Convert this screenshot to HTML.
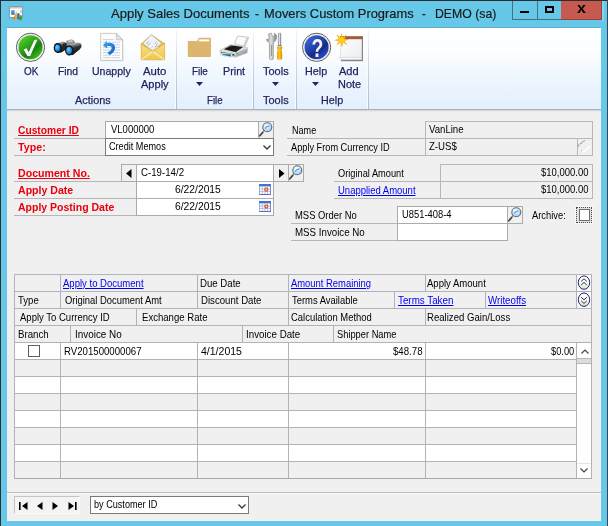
<!DOCTYPE html>
<html><head><meta charset="utf-8"><title>Apply Sales Documents</title>
<style>
html,body{margin:0;padding:0;}
body{width:608px;height:526px;overflow:hidden;background:#66c8e8;position:relative;font-family:"Liberation Sans",sans-serif;}
#w{position:absolute;left:0;top:0;width:608px;height:526px;will-change:transform;}
.a{position:absolute;box-sizing:border-box;}
.t{position:absolute;white-space:pre;transform-origin:0 0;}
svg{position:absolute;overflow:visible;}
</style></head><body>
<div id="w">
<div class="a" style="left:0px;top:0px;width:608px;height:526px;background:#66c8e8;"></div>
<div class="a" style="left:0px;top:0px;width:608px;height:1px;background:#2e2e2e;"></div>
<div class="a" style="left:0px;top:0px;width:1px;height:526px;background:#2e2e2e;"></div>
<div class="a" style="left:607px;top:0px;width:1px;height:526px;background:#3c464c;"></div>
<div class="a" style="left:7px;top:27px;width:594px;height:1px;background:#5bb0cc;"></div>
<div class="a" style="left:512px;top:1px;width:50px;height:19px;background:#46707f;"></div>
<div class="a" style="left:513px;top:1px;width:24px;height:18px;background:#66c8e8;"></div>
<div class="a" style="left:538px;top:1px;width:23px;height:18px;background:#66c8e8;"></div>
<div class="a" style="left:561px;top:1px;width:41px;height:18px;background:#c75a50;"></div>
<div class="a" style="left:561px;top:19px;width:41px;height:1px;background:#9c4038;"></div>
<div class="a" style="left:601px;top:1px;width:1px;height:19px;background:#9c4038;"></div>
<div class="a" style="left:520px;top:11px;width:9px;height:2px;background:#000;"></div>
<div class="a" style="left:545px;top:6px;width:9px;height:7px;background:transparent;border:2px solid #000;"></div>
<div class="t" style="left:577.20px;top:-1.70px;font-size:15px;line-height:20px;color:#000;transform:scaleX(1.0627);font-weight:bold;">x</div>
<div class="a" style="left:602px;top:1px;width:2px;height:20px;background:#7fd6f2;"></div>
<div class="t" style="left:110.90px;top:4.69px;font-size:13.6px;line-height:18px;color:#1a1a1a;transform:scaleX(0.9597);-webkit-text-stroke:0.2px #1a1a1a;">Apply Sales Documents</div>
<div class="t" style="left:254.60px;top:4.69px;font-size:13.6px;line-height:18px;color:#1a1a1a;transform:scaleX(0.8889);-webkit-text-stroke:0.2px #1a1a1a;">-</div>
<div class="t" style="left:264.00px;top:4.69px;font-size:13.6px;line-height:18px;color:#1a1a1a;transform:scaleX(0.9479);-webkit-text-stroke:0.2px #1a1a1a;">Movers Custom Programs</div>
<div class="t" style="left:421.90px;top:4.69px;font-size:13.6px;line-height:18px;color:#1a1a1a;transform:scaleX(0.8222);-webkit-text-stroke:0.2px #1a1a1a;">-</div>
<div class="t" style="left:435.00px;top:4.69px;font-size:13.6px;line-height:18px;color:#1a1a1a;transform:scaleX(0.9028);-webkit-text-stroke:0.2px #1a1a1a;">DEMO (sa)</div>
<div class="a" style="left:7px;top:28px;width:594px;height:81px;background:linear-gradient(#ffffff 0%,#fbfdff 30%,#eef6fe 62%,#e3effc 100%);"></div>
<div class="a" style="left:7px;top:109px;width:594px;height:1px;background:#a9b0b9;"></div>
<div class="a" style="left:176px;top:29px;width:1px;height:80px;background:linear-gradient(rgba(200,210,222,0.15) 0%,#ccd5e0 45%,#b2bdca 100%);"></div>
<div class="a" style="left:175px;top:29px;width:1px;height:80px;background:linear-gradient(rgba(255,255,255,0) 0%,rgba(255,255,255,0.8) 100%);"></div>
<div class="a" style="left:253px;top:29px;width:1px;height:80px;background:linear-gradient(rgba(200,210,222,0.15) 0%,#ccd5e0 45%,#b2bdca 100%);"></div>
<div class="a" style="left:252px;top:29px;width:1px;height:80px;background:linear-gradient(rgba(255,255,255,0) 0%,rgba(255,255,255,0.8) 100%);"></div>
<div class="a" style="left:296px;top:29px;width:1px;height:80px;background:linear-gradient(rgba(200,210,222,0.15) 0%,#ccd5e0 45%,#b2bdca 100%);"></div>
<div class="a" style="left:295px;top:29px;width:1px;height:80px;background:linear-gradient(rgba(255,255,255,0) 0%,rgba(255,255,255,0.8) 100%);"></div>
<div class="a" style="left:368px;top:29px;width:1px;height:80px;background:linear-gradient(rgba(200,210,222,0.15) 0%,#ccd5e0 45%,#b2bdca 100%);"></div>
<div class="a" style="left:367px;top:29px;width:1px;height:80px;background:linear-gradient(rgba(255,255,255,0) 0%,rgba(255,255,255,0.8) 100%);"></div>
<div class="t" style="left:23.75px;top:63.58px;font-size:11.3px;line-height:15px;color:#23235f;transform:scaleX(0.8769);-webkit-text-stroke:0.25px #23235f;">OK</div>
<div class="t" style="left:57.50px;top:63.58px;font-size:11.3px;line-height:15px;color:#23235f;transform:scaleX(0.9143);-webkit-text-stroke:0.25px #23235f;">Find</div>
<div class="t" style="left:91.50px;top:63.58px;font-size:11.3px;line-height:15px;color:#23235f;transform:scaleX(0.9333);-webkit-text-stroke:0.25px #23235f;">Unapply</div>
<div class="t" style="left:143.00px;top:63.58px;font-size:11.3px;line-height:15px;color:#23235f;transform:scaleX(1.0054);-webkit-text-stroke:0.25px #23235f;">Auto</div>
<div class="t" style="left:140.50px;top:76.98px;font-size:11.3px;line-height:15px;color:#23235f;transform:scaleX(0.9778);-webkit-text-stroke:0.25px #23235f;">Apply</div>
<div class="t" style="left:191.75px;top:63.58px;font-size:11.3px;line-height:15px;color:#23235f;transform:scaleX(0.8690);-webkit-text-stroke:0.25px #23235f;">File</div>
<div class="t" style="left:223.00px;top:63.58px;font-size:11.3px;line-height:15px;color:#23235f;transform:scaleX(0.9514);-webkit-text-stroke:0.25px #23235f;">Print</div>
<div class="t" style="left:262.50px;top:63.58px;font-size:11.3px;line-height:15px;color:#23235f;transform:scaleX(0.9714);-webkit-text-stroke:0.25px #23235f;">Tools</div>
<div class="t" style="left:305.00px;top:63.58px;font-size:11.3px;line-height:15px;color:#23235f;transform:scaleX(0.9514);-webkit-text-stroke:0.25px #23235f;">Help</div>
<div class="t" style="left:339.25px;top:63.58px;font-size:11.3px;line-height:15px;color:#23235f;transform:scaleX(0.9750);-webkit-text-stroke:0.25px #23235f;">Add</div>
<div class="t" style="left:337.50px;top:76.98px;font-size:11.3px;line-height:15px;color:#23235f;transform:scaleX(0.9684);-webkit-text-stroke:0.25px #23235f;">Note</div>
<div class="t" style="left:74.50px;top:92.68px;font-size:11.3px;line-height:15px;color:#23235f;transform:scaleX(0.9627);-webkit-text-stroke:0.25px #23235f;">Actions</div>
<div class="t" style="left:207.00px;top:92.68px;font-size:11.3px;line-height:15px;color:#23235f;transform:scaleX(0.8552);-webkit-text-stroke:0.25px #23235f;">File</div>
<div class="t" style="left:262.50px;top:92.68px;font-size:11.3px;line-height:15px;color:#23235f;transform:scaleX(0.9714);-webkit-text-stroke:0.25px #23235f;">Tools</div>
<div class="t" style="left:321.25px;top:92.68px;font-size:11.3px;line-height:15px;color:#23235f;transform:scaleX(0.9514);-webkit-text-stroke:0.25px #23235f;">Help</div>
<svg style="left:196.0px;top:81.5px" width="7" height="4"><path d="M0 0H7L3.5 4Z" fill="#1e2a5e"/></svg>
<svg style="left:271.5px;top:81.5px" width="7" height="4"><path d="M0 0H7L3.5 4Z" fill="#1e2a5e"/></svg>
<svg style="left:312.0px;top:81.5px" width="7" height="4"><path d="M0 0H7L3.5 4Z" fill="#1e2a5e"/></svg>
<div class="a" style="left:7px;top:110px;width:594px;height:411px;background:#f0f0f0;"></div>
<div class="a" style="left:600px;top:110px;width:1px;height:411px;background:#f7f3f2;"></div>
<div class="a" style="left:7px;top:520px;width:594px;height:1px;background:#f7f3f2;"></div>
<div class="a" style="left:7px;top:110px;width:594px;height:1px;background:#d6d8db;"></div>
<div class="a" style="left:7px;top:111px;width:594px;height:1px;background:#e8e9ea;"></div>
<div class="t" style="left:18.20px;top:123.19px;font-size:11px;line-height:14px;color:#e8000c;transform:scaleX(0.9315);font-weight:bold;text-decoration:underline;text-decoration-thickness:1px;text-underline-offset:1px;">Customer ID</div>
<div class="t" style="left:18.20px;top:140.19px;font-size:11px;line-height:14px;color:#e8000c;transform:scaleX(0.9719);font-weight:bold;">Type:</div>
<div class="a" style="left:14px;top:138px;width:92px;height:1px;background:#b6b6b6;"></div>
<div class="a" style="left:14px;top:155px;width:92px;height:1px;background:#b6b6b6;"></div>
<div class="t" style="left:18.20px;top:166.19px;font-size:11px;line-height:14px;color:#e8000c;transform:scaleX(0.9638);font-weight:bold;text-decoration:underline;text-decoration-thickness:1px;text-underline-offset:1px;">Document No.</div>
<div class="t" style="left:18.20px;top:183.19px;font-size:11px;line-height:14px;color:#e8000c;transform:scaleX(0.9617);font-weight:bold;">Apply Date</div>
<div class="t" style="left:18.20px;top:200.19px;font-size:11px;line-height:14px;color:#e8000c;transform:scaleX(0.9546);font-weight:bold;">Apply Posting Date</div>
<div class="a" style="left:14px;top:181px;width:108px;height:1px;background:#b6b6b6;"></div>
<div class="a" style="left:14px;top:198px;width:123px;height:1px;background:#b6b6b6;"></div>
<div class="a" style="left:14px;top:215px;width:123px;height:1px;background:#b6b6b6;"></div>
<div class="a" style="left:105px;top:121px;width:154px;height:18px;background:#fff;border:1px solid #ababab;"></div>
<div class="t" style="left:110.50px;top:122.19px;font-size:11px;line-height:14px;color:#000;transform:scaleX(0.8628);">VL000000</div>
<div class="a" style="left:258px;top:121px;width:16px;height:18px;background:#f0f0f0;border:1px solid #ababab;"></div>
<div class="a" style="left:105px;top:138px;width:169px;height:18px;background:#fff;border:1px solid #7a7a7a;"></div>
<div class="t" style="left:108.75px;top:139.19px;font-size:11px;line-height:14px;color:#000;transform:scaleX(0.8285);">Credit Memos</div>
<svg style="left:262.5px;top:145px" width="8" height="5"><path d="M0.5 0.5L4 4L7.5 0.5" fill="none" stroke="#333" stroke-width="1.3"/></svg>
<div class="a" style="left:121px;top:164px;width:16px;height:18px;background:#f0f0f0;border:1px solid #ababab;"></div>
<div class="a" style="left:136px;top:164px;width:138px;height:18px;background:#fff;border:1px solid #ababab;"></div>
<div class="a" style="left:273px;top:164px;width:16px;height:18px;background:#f0f0f0;border:1px solid #ababab;"></div>
<div class="a" style="left:288px;top:164px;width:16px;height:18px;background:#f0f0f0;border:1px solid #ababab;"></div>
<svg style="left:126px;top:168.5px" width="6" height="9"><path d="M5.5 0V9L0 4.5Z" fill="#000"/></svg>
<svg style="left:278.5px;top:168.5px" width="6" height="9"><path d="M0 0V9L5.5 4.5Z" fill="#000"/></svg>
<div class="t" style="left:140.75px;top:165.19px;font-size:11px;line-height:14px;color:#000;transform:scaleX(0.8798);">C-19-14/2</div>
<div class="a" style="left:136px;top:181px;width:138px;height:18px;background:#fff;border:1px solid #ababab;"></div>
<div class="a" style="left:136px;top:198px;width:138px;height:18px;background:#fff;border:1px solid #ababab;"></div>
<div class="t" style="left:175.00px;top:182.19px;font-size:11px;line-height:14px;color:#000;transform:scaleX(0.9361);">6/22/2015</div>
<div class="t" style="left:175.00px;top:199.19px;font-size:11px;line-height:14px;color:#000;transform:scaleX(0.9361);">6/22/2015</div>
<div class="t" style="left:292.00px;top:123.19px;font-size:11px;line-height:14px;color:#000;transform:scaleX(0.8255);">Name</div>
<div class="t" style="left:291.25px;top:140.19px;font-size:11px;line-height:14px;color:#000;transform:scaleX(0.8369);">Apply From Currency ID</div>
<div class="a" style="left:287px;top:138px;width:139px;height:1px;background:#b6b6b6;"></div>
<div class="a" style="left:287px;top:155px;width:139px;height:1px;background:#b6b6b6;"></div>
<div class="a" style="left:425px;top:121px;width:168px;height:18px;background:#f0f0f0;border:1px solid #b6b6bc;"></div>
<div class="a" style="left:425px;top:138px;width:168px;height:18px;background:#f0f0f0;border:1px solid #b6b6bc;"></div>
<div class="a" style="left:577px;top:138px;width:16px;height:18px;background:#f0f0f0;border:1px solid #b6b6bc;"></div>
<div class="t" style="left:429.25px;top:122.19px;font-size:11px;line-height:14px;color:#000;transform:scaleX(0.8734);">VanLine</div>
<div class="t" style="left:429.25px;top:139.19px;font-size:11px;line-height:14px;color:#000;transform:scaleX(0.8740);">Z-US$</div>
<div class="t" style="left:337.50px;top:166.19px;font-size:11px;line-height:14px;color:#000;transform:scaleX(0.8403);">Original Amount</div>
<div class="t" style="left:337.50px;top:183.19px;font-size:11px;line-height:14px;color:#0000f0;transform:scaleX(0.8623);text-decoration:underline;text-decoration-thickness:1px;text-underline-offset:1px;">Unapplied Amount</div>
<div class="a" style="left:334px;top:181px;width:107px;height:1px;background:#b6b6b6;"></div>
<div class="a" style="left:334px;top:198px;width:107px;height:1px;background:#b6b6b6;"></div>
<div class="a" style="left:440px;top:164px;width:153px;height:18px;background:#f0f0f0;border:1px solid #b6b6bc;"></div>
<div class="a" style="left:440px;top:181px;width:153px;height:18px;background:#f0f0f0;border:1px solid #b6b6bc;"></div>
<div class="t" style="left:541.00px;top:165.19px;font-size:11px;line-height:14px;color:#000;transform:scaleX(0.8636);">$10,000.00</div>
<div class="t" style="left:541.00px;top:182.19px;font-size:11px;line-height:14px;color:#000;transform:scaleX(0.8636);">$10,000.00</div>
<div class="t" style="left:294.50px;top:208.19px;font-size:11px;line-height:14px;color:#000;transform:scaleX(0.8562);">MSS Order No</div>
<div class="t" style="left:294.50px;top:225.19px;font-size:11px;line-height:14px;color:#000;transform:scaleX(0.8843);">MSS Invoice No</div>
<div class="a" style="left:291px;top:223px;width:107px;height:1px;background:#b6b6b6;"></div>
<div class="a" style="left:291px;top:240px;width:107px;height:1px;background:#b6b6b6;"></div>
<div class="a" style="left:397px;top:206px;width:111px;height:18px;background:#fff;border:1px solid #ababab;"></div>
<div class="a" style="left:397px;top:223px;width:111px;height:18px;background:#fff;border:1px solid #ababab;"></div>
<div class="a" style="left:507px;top:206px;width:16px;height:18px;background:#f0f0f0;border:1px solid #ababab;"></div>
<div class="t" style="left:401.75px;top:207.19px;font-size:11px;line-height:14px;color:#000;transform:scaleX(0.8516);">U851-408-4</div>
<div class="t" style="left:532.25px;top:208.19px;font-size:11px;line-height:14px;color:#000;transform:scaleX(0.8491);">Archive:</div>
<div class="a" style="left:575px;top:206px;width:18px;height:18px;background:#fafafa;"></div>
<div class="a" style="left:576px;top:207px;width:16px;height:16px;background:#e2e2e2;border:1px dotted #4a4a4a;"></div>
<div class="a" style="left:579px;top:209px;width:11px;height:12px;background:#fff;border:1px solid #6e6e6e;"></div>
<div class="a" style="left:14px;top:274px;width:577px;height:205px;background:#f0f0f0;"></div>
<div class="a" style="left:14px;top:342px;width:563px;height:17px;background:#fff;"></div>
<div class="a" style="left:14px;top:359px;width:563px;height:17px;background:#f0f0f0;"></div>
<div class="a" style="left:14px;top:376px;width:563px;height:17px;background:#fff;"></div>
<div class="a" style="left:14px;top:393px;width:563px;height:17px;background:#f0f0f0;"></div>
<div class="a" style="left:14px;top:410px;width:563px;height:17px;background:#fff;"></div>
<div class="a" style="left:14px;top:427px;width:563px;height:17px;background:#f0f0f0;"></div>
<div class="a" style="left:14px;top:444px;width:563px;height:17px;background:#fff;"></div>
<div class="a" style="left:14px;top:461px;width:563px;height:17px;background:#f0f0f0;"></div>
<div class="a" style="left:14px;top:274px;width:577px;height:1px;background:#b2b2b8;"></div>
<div class="a" style="left:14px;top:291px;width:577px;height:1px;background:#b2b2b8;"></div>
<div class="a" style="left:14px;top:308px;width:577px;height:1px;background:#b2b2b8;"></div>
<div class="a" style="left:14px;top:325px;width:577px;height:1px;background:#b2b2b8;"></div>
<div class="a" style="left:14px;top:342px;width:577px;height:1px;background:#b2b2b8;"></div>
<div class="a" style="left:14px;top:359px;width:563px;height:1px;background:#b2b2b8;"></div>
<div class="a" style="left:14px;top:376px;width:563px;height:1px;background:#b2b2b8;"></div>
<div class="a" style="left:14px;top:393px;width:563px;height:1px;background:#b2b2b8;"></div>
<div class="a" style="left:14px;top:410px;width:563px;height:1px;background:#b2b2b8;"></div>
<div class="a" style="left:14px;top:427px;width:563px;height:1px;background:#b2b2b8;"></div>
<div class="a" style="left:14px;top:444px;width:563px;height:1px;background:#b2b2b8;"></div>
<div class="a" style="left:14px;top:461px;width:563px;height:1px;background:#b2b2b8;"></div>
<div class="a" style="left:14px;top:478px;width:563px;height:1px;background:#b2b2b8;"></div>
<div class="a" style="left:14px;top:478px;width:578px;height:1px;background:#a8a8a8;"></div>
<div class="a" style="left:14px;top:274px;width:1px;height:205px;background:#b2b2b8;"></div>
<div class="a" style="left:591px;top:274px;width:1px;height:205px;background:#b2b2b8;"></div>
<div class="a" style="left:60px;top:274px;width:1px;height:17px;background:#b2b2b8;"></div>
<div class="a" style="left:197px;top:274px;width:1px;height:17px;background:#b2b2b8;"></div>
<div class="a" style="left:288px;top:274px;width:1px;height:17px;background:#b2b2b8;"></div>
<div class="a" style="left:425px;top:274px;width:1px;height:17px;background:#b2b2b8;"></div>
<div class="a" style="left:576px;top:274px;width:1px;height:17px;background:#b2b2b8;"></div>
<div class="a" style="left:60px;top:291px;width:1px;height:17px;background:#b2b2b8;"></div>
<div class="a" style="left:197px;top:291px;width:1px;height:17px;background:#b2b2b8;"></div>
<div class="a" style="left:288px;top:291px;width:1px;height:17px;background:#b2b2b8;"></div>
<div class="a" style="left:394px;top:291px;width:1px;height:17px;background:#b2b2b8;"></div>
<div class="a" style="left:485px;top:291px;width:1px;height:17px;background:#b2b2b8;"></div>
<div class="a" style="left:576px;top:291px;width:1px;height:17px;background:#b2b2b8;"></div>
<div class="a" style="left:136px;top:308px;width:1px;height:17px;background:#b2b2b8;"></div>
<div class="a" style="left:288px;top:308px;width:1px;height:17px;background:#b2b2b8;"></div>
<div class="a" style="left:425px;top:308px;width:1px;height:17px;background:#b2b2b8;"></div>
<div class="a" style="left:70px;top:325px;width:1px;height:17px;background:#b2b2b8;"></div>
<div class="a" style="left:242px;top:325px;width:1px;height:17px;background:#b2b2b8;"></div>
<div class="a" style="left:333px;top:325px;width:1px;height:17px;background:#b2b2b8;"></div>
<div class="a" style="left:60px;top:342px;width:1px;height:136px;background:#b2b2b8;"></div>
<div class="a" style="left:197px;top:342px;width:1px;height:136px;background:#b2b2b8;"></div>
<div class="a" style="left:288px;top:342px;width:1px;height:136px;background:#b2b2b8;"></div>
<div class="a" style="left:425px;top:342px;width:1px;height:136px;background:#b2b2b8;"></div>
<div class="a" style="left:576px;top:342px;width:1px;height:136px;background:#b2b2b8;"></div>
<div class="t" style="left:62.50px;top:276.19px;font-size:11px;line-height:14px;color:#0000f0;transform:scaleX(0.8668);text-decoration:underline;text-decoration-thickness:1px;text-underline-offset:1px;">Apply to Document</div>
<div class="t" style="left:200.00px;top:276.19px;font-size:11px;line-height:14px;color:#000;transform:scaleX(0.8763);">Due Date</div>
<div class="t" style="left:290.50px;top:276.19px;font-size:11px;line-height:14px;color:#0000f0;transform:scaleX(0.8556);text-decoration:underline;text-decoration-thickness:1px;text-underline-offset:1px;">Amount Remaining</div>
<div class="t" style="left:427.10px;top:276.19px;font-size:11px;line-height:14px;color:#000;transform:scaleX(0.8663);">Apply Amount</div>
<div class="t" style="left:18.00px;top:293.19px;font-size:11px;line-height:14px;color:#000;transform:scaleX(0.8691);">Type</div>
<div class="t" style="left:64.50px;top:293.19px;font-size:11px;line-height:14px;color:#000;transform:scaleX(0.8552);">Original Document Amt</div>
<div class="t" style="left:200.75px;top:293.19px;font-size:11px;line-height:14px;color:#000;transform:scaleX(0.8752);">Discount Date</div>
<div class="t" style="left:291.75px;top:293.19px;font-size:11px;line-height:14px;color:#000;transform:scaleX(0.8553);">Terms Available</div>
<div class="t" style="left:398.00px;top:293.19px;font-size:11px;line-height:14px;color:#0000f0;transform:scaleX(0.8918);text-decoration:underline;text-decoration-thickness:1px;text-underline-offset:1px;">Terms Taken</div>
<div class="t" style="left:488.00px;top:293.19px;font-size:11px;line-height:14px;color:#0000f0;transform:scaleX(0.8837);text-decoration:underline;text-decoration-thickness:1px;text-underline-offset:1px;">Writeoffs</div>
<div class="t" style="left:19.50px;top:310.19px;font-size:11px;line-height:14px;color:#000;transform:scaleX(0.8651);">Apply To Currency ID</div>
<div class="t" style="left:142.00px;top:310.19px;font-size:11px;line-height:14px;color:#000;transform:scaleX(0.8704);">Exchange Rate</div>
<div class="t" style="left:291.25px;top:310.19px;font-size:11px;line-height:14px;color:#000;transform:scaleX(0.8579);">Calculation Method</div>
<div class="t" style="left:427.40px;top:310.19px;font-size:11px;line-height:14px;color:#000;transform:scaleX(0.8723);">Realized Gain/Loss</div>
<div class="t" style="left:18.00px;top:327.19px;font-size:11px;line-height:14px;color:#000;transform:scaleX(0.8817);">Branch</div>
<div class="t" style="left:74.50px;top:327.19px;font-size:11px;line-height:14px;color:#000;transform:scaleX(0.8990);">Invoice No</div>
<div class="t" style="left:246.25px;top:327.19px;font-size:11px;line-height:14px;color:#000;transform:scaleX(0.8875);">Invoice Date</div>
<div class="t" style="left:336.75px;top:327.19px;font-size:11px;line-height:14px;color:#000;transform:scaleX(0.8455);">Shipper Name</div>
<div class="a" style="left:28px;top:345px;width:12px;height:12px;background:#fff;border:1px solid #5e5e5e;"></div>
<div class="t" style="left:63.75px;top:344.19px;font-size:11px;line-height:14px;color:#000;transform:scaleX(0.8757);">RV201500000067</div>
<div class="t" style="left:200.75px;top:344.19px;font-size:11px;line-height:14px;color:#000;transform:scaleX(0.9563);">4/1/2015</div>
<div class="t" style="left:393.00px;top:344.19px;font-size:11px;line-height:14px;color:#000;transform:scaleX(0.8773);">$48.78</div>
<div class="t" style="left:551.40px;top:344.19px;font-size:11px;line-height:14px;color:#000;transform:scaleX(0.8436);">$0.00</div>
<div class="a" style="left:577px;top:343px;width:14px;height:135px;background:#fff;"></div>
<div class="a" style="left:577px;top:358px;width:14px;height:6px;background:#dcdcdc;border-top:1px solid #b8b8b8;border-bottom:1px solid #b8b8b8;"></div>
<svg style="left:580.5px;top:348.5px" width="8" height="5"><path d="M0.5 4.5L4 1L7.5 4.5" fill="none" stroke="#444" stroke-width="1.2"/></svg>
<div class="a" style="left:577px;top:463px;width:14px;height:1px;background:#e4e4e4;"></div>
<svg style="left:579.5px;top:468px" width="8" height="5"><path d="M0.5 0.5L4 4L7.5 0.5" fill="none" stroke="#444" stroke-width="1.2"/></svg>
<div class="a" style="left:7px;top:492px;width:594px;height:1px;background:#bdbdbd;"></div>
<div class="a" style="left:7px;top:493px;width:594px;height:1px;background:#fbfbfb;"></div>
<div class="a" style="left:14px;top:496px;width:66px;height:18px;background:#f4f4f4;border:1px solid #c4c4c4;border-right-color:#fafafa;border-bottom-color:#fafafa;"></div>
<svg style="left:18.5px;top:502px" width="60" height="8" fill="#000"><rect x="0" y="0" width="1.6" height="8"/><path d="M8.5 0V8L3 4Z"/><path d="M23.5 0V8L18 4Z"/><path d="M33.5 0V8L39 4Z"/><path d="M49.5 0V8L55 4Z"/><rect x="56" y="0" width="1.6" height="8"/></svg>
<div class="a" style="left:90px;top:496px;width:159px;height:18px;background:#fff;border:1px solid #7a7a7a;"></div>
<div class="t" style="left:93.75px;top:497.19px;font-size:11px;line-height:14px;color:#000;transform:scaleX(0.8282);">by Customer ID</div>
<svg style="left:237.5px;top:503.5px" width="8" height="5"><path d="M0.5 0.5L4 4L7.5 0.5" fill="none" stroke="#333" stroke-width="1.3"/></svg>
<svg style="left:8px;top:5px" width="17" height="17" viewBox="8 5 17 17">
<defs><linearGradient id="ai1" x1="0" y1="0" x2="0" y2="1"><stop offset="0" stop-color="#6aa8ee"/><stop offset="1" stop-color="#2f6cc4"/></linearGradient>
<linearGradient id="ai2" x1="0" y1="1" x2="1" y2="0"><stop offset="0" stop-color="#e8381a"/><stop offset="0.45" stop-color="#f79a16"/><stop offset="1" stop-color="#ffd21c"/></linearGradient></defs>
<rect x="9.4" y="6.6" width="13.2" height="10.8" fill="#fdfdfd" stroke="#8e8e94" stroke-width="0.9"/>
<rect x="9.9" y="7" width="12.2" height="1.5" fill="#c4c6cc"/>
<rect x="11.2" y="10" width="3.4" height="4.8" fill="url(#ai1)"/>
<rect x="20.2" y="10" width="1.6" height="3" fill="#a8cdf2"/>
<path d="M11.4 19.9C13.8 18.4 15 15 16.4 10.2C17 13 17.2 16.5 17.4 19.2C15.5 18.4 13.5 18.9 11.4 19.9Z" fill="url(#ai2)"/>
<path d="M17.2 19.1V14Q18.4 11.8 19.6 14V19.7Z" fill="#2d6db6"/>
<path d="M19.7 19.8V16Q20.8 14 21.9 16V20.5Z" fill="#4c9a1e"/>
</svg>
<svg style="left:15px;top:32px" width="32" height="31" viewBox="15 32 32 31">
<defs><linearGradient id="ok1" x1="0.15" y1="0.1" x2="0.85" y2="0.95"><stop offset="0" stop-color="#52cf2a"/><stop offset="0.45" stop-color="#2a9a16"/><stop offset="0.62" stop-color="#1c7c10"/><stop offset="1" stop-color="#3fca1c"/></linearGradient></defs>
<circle cx="30.5" cy="47.3" r="14.1" fill="#fff" stroke="#5c5c5c" stroke-width="1"/>
<circle cx="30.5" cy="47.3" r="12.7" fill="none" stroke="#d4d4d4" stroke-width="0.7"/>
<circle cx="30.5" cy="47.3" r="12" fill="url(#ok1)"/>
<path d="M23.6 49.6L26.6 48.2L28.7 52.2L34.4 39.9L37.4 39.4L30.2 56H27.4Z" fill="#fff"/>
<path d="M27.6 55.6L30.4 55.6L31.6 53L28.6 52.4Z" fill="#e6e0e6" opacity="0.8"/>
</svg>
<svg style="left:52px;top:38px" width="31" height="19" viewBox="52 38 31 19">
<defs><linearGradient id="bn1" x1="0.3" y1="0" x2="0.6" y2="1"><stop offset="0" stop-color="#e4e4e4"/><stop offset="0.22" stop-color="#8a8a8a"/><stop offset="0.45" stop-color="#2e2e2e"/><stop offset="1" stop-color="#161616"/></linearGradient>
<radialGradient id="bn2" cx="0.4" cy="0.35" r="0.75"><stop offset="0" stop-color="#7ad0ff"/><stop offset="0.55" stop-color="#2294ea"/><stop offset="1" stop-color="#0c5cb0"/></radialGradient></defs>
<path d="M66 41L71 39.6Q73.4 39.4 74.6 41.4L75.4 43.4L67.6 45.6Z" fill="#8c8c8c"/>
<path d="M67.6 40.8L71.6 39.8L73.6 41.4L69 42.8Z" fill="#c4c4c4"/>
<path d="M55.6 43.4L62.6 41.4Q65.4 41.2 66.4 43.4L66.8 49L61.4 52.6L57 53Z" fill="url(#bn1)"/>
<path d="M66 45.6L76.4 42.6Q81.8 42.4 81.6 46Q81.4 48 79.6 49.4L73 55L68 55.2Z" fill="url(#bn1)"/>
<path d="M62.8 44L66.6 42.8L67 47.4L63.6 49.6Z" fill="#262626"/>
<ellipse cx="57.6" cy="47.9" rx="3.9" ry="5" fill="#14161a"/>
<ellipse cx="57.5" cy="48" rx="2.6" ry="3.5" fill="url(#bn2)"/>
<ellipse cx="69.2" cy="50.3" rx="4.2" ry="5.1" fill="#14161a"/>
<ellipse cx="69.1" cy="50.4" rx="2.9" ry="3.7" fill="url(#bn2)"/>
</svg>
<svg style="left:99px;top:32px" width="26" height="30" viewBox="99 32 26 30">
<defs><linearGradient id="un1" x1="0" y1="0" x2="1" y2="1"><stop offset="0" stop-color="#3aa8f4"/><stop offset="1" stop-color="#0a62c8"/></linearGradient></defs>
<path d="M101.2 34.2H117L123.4 40.6V61.2H101.2Z" fill="#c8c8c8" opacity="0.6"/>
<path d="M100.6 33.4H116.4L122.6 39.8V60.4H100.6Z" fill="#fcfcfc" stroke="#bcbcbc" stroke-width="0.8"/>
<path d="M116.4 33.4V39.8H122.6Z" fill="#e4e4e4" stroke="#b4b4b4" stroke-width="0.7"/>
<g stroke="#c4cfe4" stroke-width="0.9"><path d="M103 39.6H114M103 42.2H120M103 44.8H120M103 47.4H120M103 50H120M103 52.6H120M103 55.2H120M103 57.6H120"/></g>
<rect x="111.2" y="41" width="0.9" height="17.4" fill="#fcfcfc"/>
<path d="M103 45.6L106.6 40.8L106.8 43.2C112 41.6 115.6 44.4 115 48.6C114.6 51.6 112 54 109.4 55L107.4 52.6C110 51.4 111.8 49.8 111.6 47.8C111.4 46 109.6 45.6 107 46.2L107.2 48.4Z" fill="url(#un1)"/>
</svg>
<svg style="left:140px;top:33px" width="26" height="28" viewBox="140 33 26 28">
<defs><linearGradient id="en1" x1="0" y1="0" x2="0" y2="1"><stop offset="0" stop-color="#f8e08a"/><stop offset="1" stop-color="#efc64e"/></linearGradient></defs>
<path d="M141.2 43.6L151.3 34.2L164.6 43.2V47H141.2Z" fill="#e6bc42"/>
<path d="M151.3 34.6L161.8 43.4L152.4 50.4L142.8 43.6Z" fill="#f0f2f6" stroke="#a8a8a8" stroke-width="0.6"/>
<g stroke="#9aa0aa" stroke-width="0.8"><path d="M146 44L149 41.4M147.6 45.6L150.6 43M154.6 43.6L156.4 42M156 45L157.8 43.4M151.6 47.4L152.8 46.4M155 47L156.6 45.6"/></g>
<path d="M141.2 43.6L152.8 51.4L164.6 43.2V59.8H141.2Z" fill="url(#en1)" stroke="#d8ac38" stroke-width="0.7"/>
<path d="M141.6 59.4L152.8 51.4L164.2 59.4" fill="none" stroke="#fbeeb4" stroke-width="1.2"/>
<path d="M141.4 44L152.8 51.6L164.4 43.6" fill="none" stroke="#e2b83e" stroke-width="0.8"/>
</svg>
<svg style="left:187px;top:37px" width="25" height="21" viewBox="187 37 25 21">
<path d="M187.8 41.6Q187.8 41 188.4 41H197.2L198.4 38.2Q198.6 37.7 199.2 37.7H210.4Q211 37.7 211 38.3V56.3Q211 56.9 210.4 56.9H188.4Q187.8 56.9 187.8 56.3Z" fill="#dcb56e"/>
<rect x="198.9" y="39.4" width="10.3" height="2" fill="#fff"/>
</svg>
<svg style="left:219px;top:35px" width="30" height="23" viewBox="219 35 30 23">
<defs><linearGradient id="pr1" x1="0" y1="0" x2="1" y2="1"><stop offset="0" stop-color="#8a8a8a"/><stop offset="0.35" stop-color="#161616"/><stop offset="1" stop-color="#2c2c2c"/></linearGradient>
<linearGradient id="pr2" x1="0" y1="0" x2="1" y2="0"><stop offset="0" stop-color="#2c8cf0"/><stop offset="0.45" stop-color="#2aa05a"/><stop offset="0.7" stop-color="#1e6ee0"/><stop offset="1" stop-color="#1a50c0"/></linearGradient>
<linearGradient id="pr3" x1="0" y1="0" x2="1" y2="1"><stop offset="0" stop-color="#d0d0d4"/><stop offset="1" stop-color="#86868c"/></linearGradient></defs>
<path d="M237.6 36L248.7 37.4L245 46.4L234.4 43.8Z" fill="#fbfbfb" stroke="#b0b0b0" stroke-width="0.7"/>
<path d="M246.4 37.4L248.7 37.6L245.2 46.2L243.4 45.8Z" fill="#cfcfcf"/>
<path d="M220 50.4L230.4 44.6L247.4 47.4L247.2 52.8L235.2 57.2L220.4 53.8Z" fill="#dededf" stroke="#a8a8ac" stroke-width="0.5"/>
<path d="M223.8 49.2L230.8 45.2L243 47L235.8 52.2Z" fill="url(#pr1)"/>
<path d="M235.4 53L247.2 48.6V52.8L235.2 57.2Z" fill="url(#pr3)"/>
<path d="M221 51.8L234.4 54.2V55.8L221 53.2Z" fill="#2a2a2e"/>
<path d="M221.8 52.6L232.4 54L231.2 57.3L220.6 55.3Z" fill="#f6f6f6" stroke="#b8b8b8" stroke-width="0.4"/>
<path d="M222.8 53.4L231.2 54.5L230.5 56.5L222 55.1Z" fill="url(#pr2)"/>
<circle cx="237.3" cy="53.6" r="0.8" fill="#46b046"/>
</svg>
<svg style="left:265px;top:32px" width="19" height="29" viewBox="265 32 19 29">
<defs><linearGradient id="tl1" x1="0" y1="0" x2="1" y2="0"><stop offset="0" stop-color="#8c8c8c"/><stop offset="0.45" stop-color="#e2e2e2"/><stop offset="1" stop-color="#7c7c7c"/></linearGradient>
<linearGradient id="tl2" x1="0" y1="0" x2="1" y2="0"><stop offset="0" stop-color="#e09a00"/><stop offset="0.4" stop-color="#ffc820"/><stop offset="1" stop-color="#d88c00"/></linearGradient></defs>
<path d="M268.4 34.2L271.4 33L272.4 36.4L275 35.6L274 33.2Q277 34 276.6 38Q276 41.4 273.4 42.6V58.4Q273.2 59.8 271.4 59.8Q269.6 59.8 269.4 58.4V42.6Q266.6 41.6 266.4 39.6L269.4 38.6Z" fill="url(#tl1)" stroke="#7a7a7a" stroke-width="0.5"/>
<rect x="270.9" y="45" width="0.9" height="11" fill="#8a8a8a"/>
<path d="M278.3 33.4Q279.6 32.6 281 33.4V45.8H278.3Z" fill="url(#tl1)" stroke="#808080" stroke-width="0.4"/>
<rect x="277.8" y="45.2" width="3.6" height="0.9" fill="#4a78d0"/>
<path d="M277 46.4H282.2V48.4L281.4 49.8Q282.4 52 282.2 58.4Q282 59.8 279.6 59.8Q277.2 59.8 277 58.4Q276.8 52 277.8 49.8L277 48.4Z" fill="url(#tl2)"/>
</svg>
<svg style="left:301px;top:32px" width="32" height="31" viewBox="301 32 32 31">
<defs><linearGradient id="hp1" x1="0.15" y1="0.1" x2="0.85" y2="0.95"><stop offset="0" stop-color="#3c62d2"/><stop offset="0.45" stop-color="#1e3ea8"/><stop offset="0.62" stop-color="#142c88"/><stop offset="1" stop-color="#2c50d8"/></linearGradient></defs>
<circle cx="316.6" cy="47.3" r="14.1" fill="#fff" stroke="#5c5c5c" stroke-width="1"/>
<circle cx="316.6" cy="47.3" r="12.7" fill="none" stroke="#d4d4d4" stroke-width="0.7"/>
<circle cx="316.6" cy="47.3" r="12" fill="url(#hp1)"/>
<text x="0" y="0" transform="translate(311.4 57) scale(0.76 1)" font-family="Liberation Sans, sans-serif" font-weight="bold" font-size="25.5" fill="#f4f2f4">?</text>
</svg>
<svg style="left:334px;top:32px" width="30" height="30" viewBox="334 32 30 30">
<defs><linearGradient id="an1" x1="0" y1="0" x2="1" y2="1"><stop offset="0" stop-color="#ffffff"/><stop offset="1" stop-color="#ececec"/></linearGradient>
<radialGradient id="an2" cx="0.5" cy="0.5" r="0.5"><stop offset="0" stop-color="#ffe030"/><stop offset="0.5" stop-color="#fcb808"/><stop offset="1" stop-color="#f08c00"/></radialGradient></defs>
<rect x="341" y="37" width="22" height="24.2" fill="#858585"/>
<rect x="340.2" y="36.2" width="21.6" height="23.4" fill="url(#an1)"/>
<rect x="340.2" y="36" width="22.6" height="3.2" fill="#a05c3c"/>
<rect x="340" y="39" width="0.6" height="19" fill="#d4d4d4"/>
<rect x="340.2" y="36" width="22.6" height="1" fill="#b87858"/>
<path d="M339.2 57.4H361.4V59.4H340.2Z" fill="#fafafa" stroke="#c0c0c0" stroke-width="0.4"/>
<path d="M341.6 32.6L342.6 37.4L346.4 34.2L344.4 38.6L349 39.4L344.5 40.9L347.4 45L343.2 42.6L342 47.4L340.6 42.6L336.4 45.4L338.8 41.2L334.2 40.2L338.8 38.8L336.4 34.6L340.6 37.2Z" fill="url(#an2)"/>
</svg>
<svg style="left:258px;top:121px" width="16" height="17" viewBox="258 121 16 17">
<defs><radialGradient id="mg1" cx="0.4" cy="0.35" r="0.7"><stop offset="0" stop-color="#ffffff"/><stop offset="0.5" stop-color="#cfe6ff"/><stop offset="1" stop-color="#8cc0f4"/></radialGradient></defs>
<path d="M264.2 130.6L259.8 135.8" stroke="#8a8a8a" stroke-width="1.5" stroke-linecap="round"/>
<path d="M262.6 132.6L259.8 135.8" stroke="#4a4a4a" stroke-width="1.6" stroke-linecap="round"/>
<circle cx="267.3" cy="127.2" r="4.5" fill="url(#mg1)" stroke="#6c6c6c" stroke-width="1.1"/>
<path d="M265.2 128.6Q267 125.4 269.4 126.2" stroke="#4a9cec" stroke-width="1.3" fill="none"/>
</svg>
<svg style="left:288px;top:164px" width="16" height="17" viewBox="288 164 16 17">
<defs><radialGradient id="mg2" cx="0.4" cy="0.35" r="0.7"><stop offset="0" stop-color="#ffffff"/><stop offset="0.5" stop-color="#cfe6ff"/><stop offset="1" stop-color="#8cc0f4"/></radialGradient></defs>
<path d="M294.2 173.6L289.8 178.8" stroke="#8a8a8a" stroke-width="1.5" stroke-linecap="round"/>
<path d="M292.6 175.6L289.8 178.8" stroke="#4a4a4a" stroke-width="1.6" stroke-linecap="round"/>
<circle cx="297.3" cy="170.2" r="4.5" fill="url(#mg2)" stroke="#6c6c6c" stroke-width="1.1"/>
<path d="M295.2 171.6Q297 168.4 299.4 169.2" stroke="#4a9cec" stroke-width="1.3" fill="none"/>
</svg>
<svg style="left:507px;top:206px" width="16" height="17" viewBox="507 206 16 17">
<defs><radialGradient id="mg3" cx="0.4" cy="0.35" r="0.7"><stop offset="0" stop-color="#ffffff"/><stop offset="0.5" stop-color="#cfe6ff"/><stop offset="1" stop-color="#8cc0f4"/></radialGradient></defs>
<path d="M513.2 215.6L508.8 220.8" stroke="#8a8a8a" stroke-width="1.5" stroke-linecap="round"/>
<path d="M511.6 217.6L508.8 220.8" stroke="#4a4a4a" stroke-width="1.6" stroke-linecap="round"/>
<circle cx="516.3" cy="212.2" r="4.5" fill="url(#mg3)" stroke="#6c6c6c" stroke-width="1.1"/>
<path d="M514.2 213.6Q516 210.4 518.4 211.2" stroke="#4a9cec" stroke-width="1.3" fill="none"/>
</svg>
<svg style="left:577px;top:138px" width="16" height="17" viewBox="577 138 16 17">
<path d="M578.6 146.8V145L580 143.6H581.4L582.4 141.6L585 140.6" stroke="#8c8c8c" stroke-width="0.8" fill="none"/>
<path d="M583.4 152.2L590 146.2" stroke="#ffffff" stroke-width="1.3"/>
<path d="M581.4 150.2L581.6 151" stroke="#9a9a9a" stroke-width="0.7"/>
</svg>
<svg style="left:259px;top:184px" width="12" height="11" viewBox="259 184 12 11">
<rect x="259" y="184" width="12" height="11" fill="#8ea2da"/>
<rect x="259" y="194" width="12" height="1" fill="#4c4ca4"/>
<rect x="259" y="184" width="0.7" height="11" fill="#7c94b4"/>
<rect x="270.3" y="184" width="0.7" height="11" fill="#5a68b8"/>
<rect x="259" y="184" width="12" height="2.1" fill="#3c74d8"/>
<g fill="#f6f9ff"><rect x="259.70" y="186.50" width="2.2" height="2.2"/><rect x="262.45" y="186.50" width="2.2" height="2.2"/><rect x="265.20" y="186.50" width="2.2" height="2.2"/><rect x="267.95" y="186.50" width="2.2" height="2.2"/><rect x="259.70" y="189.25" width="2.2" height="2.2"/><rect x="262.45" y="189.25" width="2.2" height="2.2"/><rect x="265.20" y="189.25" width="2.2" height="2.2"/><rect x="267.95" y="189.25" width="2.2" height="2.2"/><rect x="259.70" y="192.00" width="2.2" height="2.2"/><rect x="262.45" y="192.00" width="2.2" height="2.2"/><rect x="265.20" y="192.00" width="2.2" height="2.2"/><rect x="267.95" y="192.00" width="2.2" height="2.2"/></g>
<circle cx="266.3" cy="189.6" r="2.1" fill="#ea5a24"/>
<circle cx="266.3" cy="189.6" r="0.8" fill="#ffe0c0"/>
</svg>
<svg style="left:259px;top:201px" width="12" height="11" viewBox="259 201 12 11">
<rect x="259" y="201" width="12" height="11" fill="#8ea2da"/>
<rect x="259" y="211" width="12" height="1" fill="#4c4ca4"/>
<rect x="259" y="201" width="0.7" height="11" fill="#7c94b4"/>
<rect x="270.3" y="201" width="0.7" height="11" fill="#5a68b8"/>
<rect x="259" y="201" width="12" height="2.1" fill="#3c74d8"/>
<g fill="#f6f9ff"><rect x="259.70" y="203.50" width="2.2" height="2.2"/><rect x="262.45" y="203.50" width="2.2" height="2.2"/><rect x="265.20" y="203.50" width="2.2" height="2.2"/><rect x="267.95" y="203.50" width="2.2" height="2.2"/><rect x="259.70" y="206.25" width="2.2" height="2.2"/><rect x="262.45" y="206.25" width="2.2" height="2.2"/><rect x="265.20" y="206.25" width="2.2" height="2.2"/><rect x="267.95" y="206.25" width="2.2" height="2.2"/><rect x="259.70" y="209.00" width="2.2" height="2.2"/><rect x="262.45" y="209.00" width="2.2" height="2.2"/><rect x="265.20" y="209.00" width="2.2" height="2.2"/><rect x="267.95" y="209.00" width="2.2" height="2.2"/></g>
<circle cx="266.3" cy="206.6" r="2.1" fill="#ea5a24"/>
<circle cx="266.3" cy="206.6" r="0.8" fill="#ffe0c0"/>
</svg>
<div class="a" style="left:577px;top:275px;width:14px;height:16px;background:#f8f8f8;"></div>
<div class="a" style="left:577px;top:292px;width:14px;height:16px;background:#f8f8f8;"></div>
<svg style="left:577px;top:275px" width="15" height="33" viewBox="577 275 15 33">
<defs><linearGradient id="ex1" x1="0" y1="0" x2="0" y2="1"><stop offset="0" stop-color="#ffffff"/><stop offset="0.6" stop-color="#f4faf2"/><stop offset="1" stop-color="#c4e6c0"/></linearGradient></defs>
<ellipse cx="584" cy="282.6" rx="5.7" ry="6.7" fill="url(#ex1)" stroke="#262682" stroke-width="1"/>
<path d="M581.2 281.4L584 278.8L586.8 281.4M581.2 285L584 282.4L586.8 285" fill="none" stroke="#303040" stroke-width="1"/>
<ellipse cx="584" cy="299.7" rx="5.7" ry="6.7" fill="url(#ex1)" stroke="#262682" stroke-width="1"/>
<path d="M581.2 297.2L584 299.8L586.8 297.2M581.2 300.8L584 303.4L586.8 300.8" fill="none" stroke="#303040" stroke-width="1"/>
</svg>
</div>
</body></html>
